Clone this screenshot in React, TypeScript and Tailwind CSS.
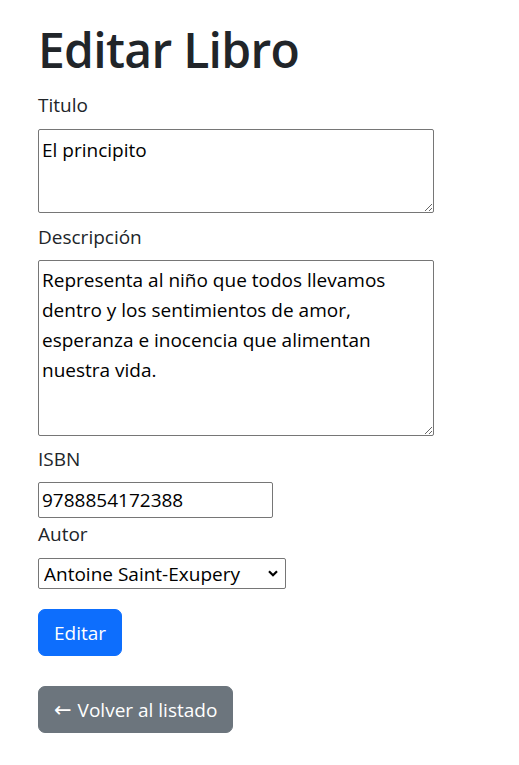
import React from "react";

export default function App() {
  const font = { fontFamily: '"Open Sans", "Noto Sans", sans-serif' };
  return (
    <div className="min-h-screen bg-white text-[#212529]" style={font}>
      <div className="pl-[38px] pt-[20px] pb-[30px]">
        <h1 className="m-0 text-[48px] leading-[60px] font-semibold tracking-[-0.7px]">Editar Libro</h1>
        <form className="mt-[10px]" onSubmit={(e) => e.preventDefault()}>
          <label className="block text-[19px] leading-[30px]">Titulo</label>
          <textarea
            className="mt-[9px] block w-[396px] h-[84px] border border-[#767676] rounded-[2px] px-[3px] pt-[5px] pb-[3px] text-[19px] leading-[30px] text-black"
            defaultValue="El principito"
          />
          <label className="mt-[9px] block text-[19px] leading-[30px]">Descripción</label>
          <textarea
            className="mt-[8px] block w-[396px] h-[176px] border border-[#767676] rounded-[2px] px-[3px] pt-[4px] pb-[3px] text-[19px] leading-[30px] text-black"
            defaultValue="Representa al niño que todos llevamos dentro y los sentimientos de amor, esperanza e inocencia que alimentan nuestra vida."
          />
          <label className="mt-[8px] block text-[19px] leading-[30px]">ISBN</label>
          <input
            className="mt-[8px] block w-[235px] h-[36px] border border-[#767676] rounded-[2px] px-[3px] text-[19px] text-black"
            defaultValue="9788854172388"
          />
          <label className="mt-[1px] block text-[19px] leading-[30px]">Autor</label>
          <div className="relative mt-[9px] w-[248px] h-[31px]">
            <select
              className="appearance-none block w-full h-full border border-[#767676] rounded-[2px] pl-[5px] pr-[24px] text-[19px] leading-[28px] text-black bg-white"
              defaultValue="a"
            >
              <option value="a">Antoine Saint-Exupery</option>
            </select>
            <svg
              className="pointer-events-none absolute right-[8px] top-[12px]"
              width="10"
              height="7"
              viewBox="0 0 10 7"
              fill="none"
            >
              <path d="M1 1.2 L5 5.2 L9 1.2" stroke="#000" strokeWidth="2.2" />
            </svg>
          </div>
          <button
            type="submit"
            className="mt-[20px] flex items-center h-[47px] px-[15px] rounded-[7px] bg-[#0d6efd] border border-[#0d6efd] text-white text-[19px] leading-[30px]"
          >
            Editar
          </button>
        </form>
        <a
          href="#"
          className="mt-[30px] inline-flex items-center h-[47px] px-[15px] rounded-[7px] bg-[#6c757d] border border-[#6c757d] text-white text-[19px] leading-[30px] no-underline"
        >
          <span style={{ fontFamily: '"DejaVu Sans", sans-serif' }} className="text-[21px] leading-[30px] mr-[6px]">←</span>
          Volver al listado
        </a>
      </div>
    </div>
  );
}
